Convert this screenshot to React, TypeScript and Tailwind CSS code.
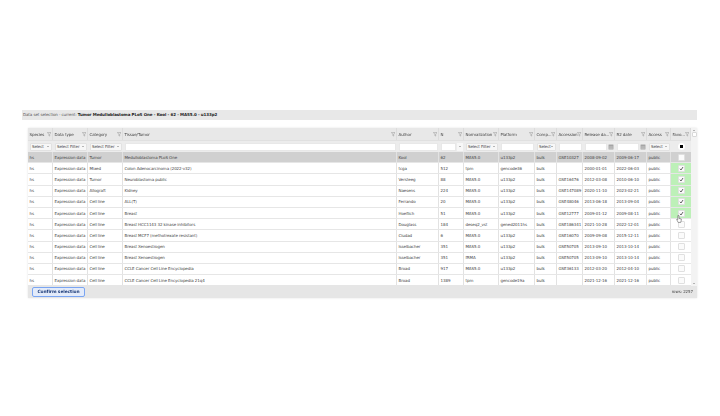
const gridCols = "grid grid-cols-[25px_35px_35px_274px_42px_25px_35px_36px_22px_26px_32px_32px_24px_20px]";

const headers = ["Species", "Data type", "Category", "Tissue/Tumor", "Author", "N", "Normalization", "Platform", "Comp...", "Accession", "Release da...", "R2 date", "Access", "Favo..."];

const rows = [
  ["hs", "Expression data", "Tumor", "Medulloblastoma PLoS One", "Kool", "62", "MAS5.0", "u133p2", "bulk", "GSE10327", "2008-09-02", "2009-06-17", "public"],
  ["hs", "Expression data", "Mixed", "Colon Adenocarcinoma (2022-v32)", "tcga", "512", "tpm", "gencode36", "bulk", "", "2000-01-01", "2022-06-03", "public"],
  ["hs", "Expression data", "Tumor", "Neuroblastoma public", "Versteeg", "88", "MAS5.0", "u133p2", "bulk", "GSE16476", "2012-03-08", "2010-06-10", "public"],
  ["hs", "Expression data", "Allograft", "Kidney", "Naesens", "224", "MAS5.0", "u133p2", "bulk", "GSE147089", "2020-11-10", "2023-02-21", "public"],
  ["hs", "Expression data", "Cell line", "ALL(T)", "Ferrando", "20", "MAS5.0", "u133p2", "bulk", "GSE48046", "2013-06-18", "2013-09-04", "public"],
  ["hs", "Expression data", "Cell line", "Breast", "Hoeflich", "51", "MAS5.0", "u133p2", "bulk", "GSE12777", "2009-01-12", "2009-08-11", "public"],
  ["hs", "Expression data", "Cell line", "Breast HCC1143 32 kinase inhibitors", "Douglass", "184", "deseq2_vst", "gened2011hs", "bulk", "GSE186341", "2021-10-28", "2022-12-01", "public"],
  ["hs", "Expression data", "Cell line", "Breast MCF7 (methotrexate resistant)", "Ciudad", "6", "MAS5.0", "u133p2", "bulk", "GSE16070", "2009-09-08", "2015-12-11", "public"],
  ["hs", "Expression data", "Cell line", "Breast Xenoestrogen", "Isselbacher", "351", "MAS5.0", "u133p2", "bulk", "GSE50705", "2013-09-10", "2013-10-14", "public"],
  ["hs", "Expression data", "Cell line", "Breast Xenoestrogen", "Isselbacher", "351", "fRMA", "u133p2", "bulk", "GSE50705", "2013-09-10", "2013-10-14", "public"],
  ["hs", "Expression data", "Cell line", "CCLE Cancer Cell Line Encyclopedia", "Broad", "917", "MAS5.0", "u133p2", "bulk", "GSE36133", "2012-03-20", "2012-04-10", "public"],
  ["hs", "Expression data", "Cell line", "CCLE Cancer Cell Line Encyclopedia 21q4", "Broad", "1389", "tpm", "gencode19a", "bulk", "", "2021-12-16", "2021-12-16", "public"],
];

function Funnel() {
  return (
    <svg viewBox="0 0 10 10" className="absolute right-[1px] top-[4px] h-[4.5px] w-[4.5px]">
      <path d="M1 1h8L6 5v4L4 8V5z" fill="none" stroke="#8c8c8c" strokeWidth="1" />
    </svg>
  );
}

function Calendar() {
  return (
    <svg viewBox="0 0 10 10" className="h-[6px] w-[6px] shrink-0">
      <rect x="1" y="1" width="8" height="8" fill="#9a9a9a" />
      <path d="M1 3.5h8M1 5.5h8M1 7.5h8M3.5 3v6M6.5 3v6" stroke="#dedede" strokeWidth="0.6" />
    </svg>
  );
}

function Caret() {
  return <span className="h-0 w-0 border-x-[1.5px] border-t-[1.5px] border-x-transparent border-t-[#777]" />;
}

function SelectBox({ label }: { label: string }) {
  return (
    <div className="flex h-[8px] w-full items-center justify-between rounded-[1px] border border-[#e2e2e2] bg-[#f7f7f7] px-[1.5px]">
      <span>{label}</span>
      <Caret />
    </div>
  );
}

function TextBox() {
  return <div className="h-[8px] w-full border border-[#e8e8e8] bg-white" />;
}

function FilterRow() {
  const cell = "flex items-center px-[1.5px]";
  return (
    <div className={`${gridCols} h-[11px] bg-[#ececec]`}>
      <div className={cell}><SelectBox label="Select" /></div>
      <div className={cell}><SelectBox label="Select Filter" /></div>
      <div className={cell}><SelectBox label="Select Filter" /></div>
      <div className={cell}><TextBox /></div>
      <div className={cell}><TextBox /></div>
      <div className={`${cell} gap-[1px]`}>
        <TextBox />
        <div className="flex h-[8px] w-[6px] shrink-0 items-center justify-center bg-[#f7f7f7]"><Caret /></div>
      </div>
      <div className={cell}><SelectBox label="Select Filter" /></div>
      <div className={cell}><TextBox /></div>
      <div className={cell}><SelectBox label="Select" /></div>
      <div className={cell}><TextBox /></div>
      <div className={`${cell} gap-[1px]`}><TextBox /><Calendar /></div>
      <div className={`${cell} gap-[1px]`}><TextBox /><Calendar /></div>
      <div className={cell}><SelectBox label="Select" /></div>
      <div className="flex items-center justify-center">
        <div className="flex h-[7px] w-[7px] items-center justify-center rounded-full bg-white">
          <div className="h-[3px] w-[3px] bg-black" />
        </div>
      </div>
    </div>
  );
}

function Check({ on }: { on: boolean }) {
  return (
    <div className="flex h-[7px] w-[7px] items-center justify-center rounded-[1px] border border-[#e0e0e0] bg-[#fbfbfb]">
      {on && (
        <svg viewBox="0 0 10 10" className="h-[5px] w-[5px]">
          <path d="M2 5.5l2 2.5 4-6" fill="none" stroke="#333" strokeWidth="1.5" />
        </svg>
      )}
    </div>
  );
}

export default function App() {
  return (
    <div className="h-[416px] w-[720px] overflow-hidden bg-white pl-[22px] pt-[110px] font-['DejaVu_Sans',sans-serif] text-[4px] tracking-[-0.02em] text-[#444]">
      <div className="blur-[0.3px]">
        <div className="flex h-[10px] w-[675px] items-center bg-[#e8e8e8] pl-[1px] text-[#555]">
          Data set selection - current:&nbsp;
          <span className="font-bold text-[#222]">Tumor Medulloblastoma PLoS One - Kool - 62 - MAS5.0 - u133p2</span>
        </div>

        <div className="relative ml-[6px] mt-[8px] w-[669px] shadow-[0_0_2px_#e4e4e4]">
          <div className="flex">
            <div className="w-[663px]">
              <div className={`${gridCols} h-[13px] border-b border-[#e0e0e0] bg-[#e8e8e8]`}>
                {headers.map((h) => (
                  <div key={h} className="relative flex items-center overflow-hidden whitespace-nowrap border-r border-[#dcdcdc] pl-[1.5px] pr-[5px] pt-[1px]">
                    {h}
                    <Funnel />
                  </div>
                ))}
              </div>
              <FilterRow />
              <div className="h-[134px] overflow-hidden">
                {rows.map((r, i) => (
                  <div key={i} className={`${gridCols} h-[11.2px] border-b border-[#e6e6e6] ${i === 0 ? "bg-[#d0d0d0]" : "bg-white"}`}>
                    {r.map((c, j) => (
                      <div key={j} className="flex items-center overflow-hidden whitespace-nowrap border-r border-[#e2e2e2] pl-[1.5px] pt-[1px]">
                        {c}
                      </div>
                    ))}
                    <div className={`flex items-center justify-center ${i >= 1 && i <= 5 ? "bg-[#bdf0b8]" : ""}`}>
                      <Check on={i >= 1 && i <= 5} />
                    </div>
                  </div>
                ))}
              </div>
            </div>
            <div className="flex w-[6px] flex-col items-center justify-between bg-[#f3f3f3] px-[0.5px] py-[2px]">
              <div className="flex flex-col items-center">
                <span className="h-0 w-0 border-x-[1.5px] border-b-[1.5px] border-x-transparent border-b-[#777]" />
                <div className="mt-[1px] h-[5px] w-[5px] rounded-[1px] border border-[#d8d8d8] bg-white" />
              </div>
              <Caret />
            </div>
          </div>
          <div className="flex h-[12px] items-center justify-between bg-[#e6e6e6] pl-[4px] pr-[4px]">
            <button className="h-[10px] w-[53px] rounded-[2px] border border-[#7aa5f2] bg-[#e3ebfa] text-[4.4px] font-bold text-[#1b3a78]">
              Confirm selection
            </button>
            <span>rows: 2257</span>
          </div>

          <svg viewBox="0 0 10 14" className="absolute left-[648px] top-[87px] h-[8px] w-[6px]">
            <path d="M3 1v7L1.5 7 1 8l2.5 5H8l1-4V7L5 6V1z" fill="#fff" stroke="#444" strokeWidth="0.9" />
          </svg>
        </div>
      </div>
    </div>
  );
}
